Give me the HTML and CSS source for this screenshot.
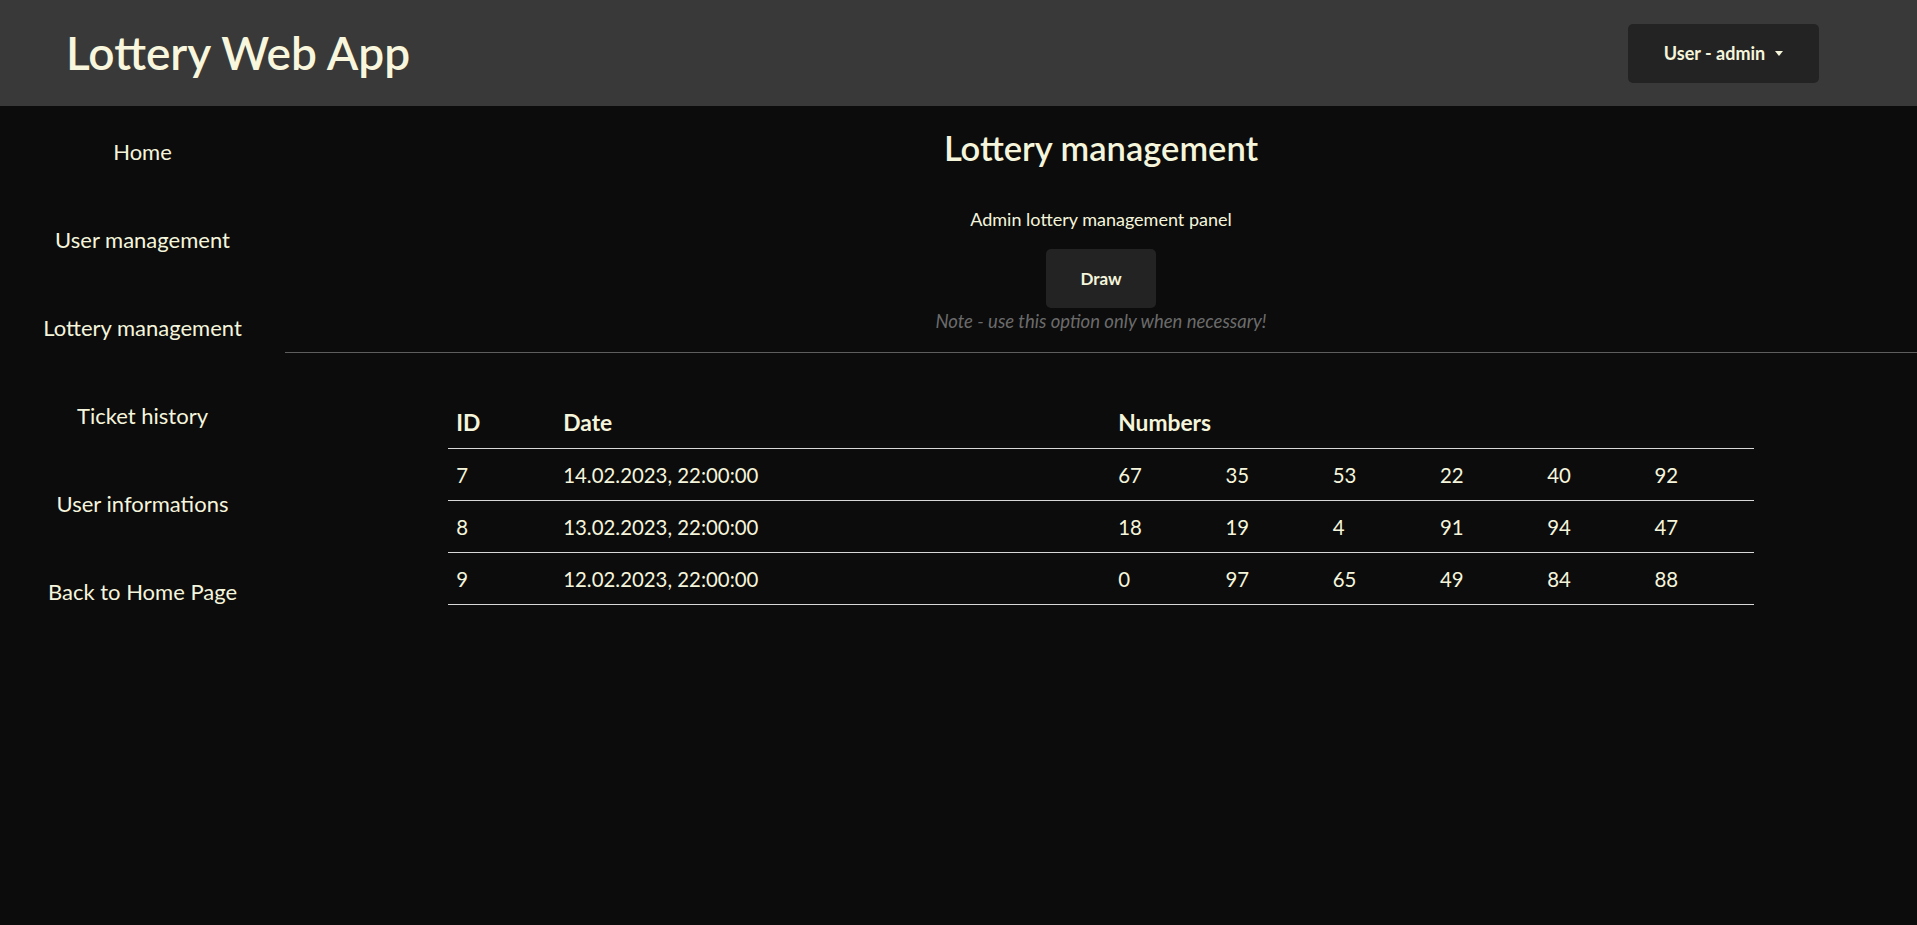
FILE: index.html
```html
<!DOCTYPE html>
<html lang="en">
<head>
<meta charset="utf-8">
<title>Lottery Web App</title>
<link rel="stylesheet" href="styles.css">
</head>
<body>
<header class="topbar">
  <h1 class="brand">Lottery Web App</h1>
  <button class="user-btn">User - admin <span class="caret"></span></button>
</header>
<div class="layout">
  <nav class="sidebar">
    <a class="nav-item" href="#">Home</a>
    <a class="nav-item" href="#">User management</a>
    <a class="nav-item" href="#">Lottery management</a>
    <a class="nav-item" href="#">Ticket history</a>
    <a class="nav-item" href="#">User informations</a>
    <a class="nav-item" href="#">Back to Home Page</a>
  </nav>
  <main class="content">
    <section class="panel">
      <h2 class="panel-title">Lottery management</h2>
      <p class="panel-sub">Admin lottery management panel</p>
      <button class="draw-btn">Draw</button>
      <p class="note">Note - use this option only when necessary!</p>
    </section>
    <hr class="divider">
    <table class="draws">
      <colgroup>
        <col class="c-id"><col class="c-date">
        <col class="c-num"><col class="c-num"><col class="c-num"><col class="c-num"><col class="c-num"><col class="c-num">
      </colgroup>
      <thead>
        <tr><th>ID</th><th>Date</th><th colspan="6">Numbers</th></tr>
      </thead>
      <tbody>
        <tr><td>7</td><td>14.02.2023, 22:00:00</td><td>67</td><td>35</td><td>53</td><td>22</td><td>40</td><td>92</td></tr>
        <tr><td>8</td><td>13.02.2023, 22:00:00</td><td>18</td><td>19</td><td>4</td><td>91</td><td>94</td><td>47</td></tr>
        <tr><td>9</td><td>12.02.2023, 22:00:00</td><td>0</td><td>97</td><td>65</td><td>49</td><td>84</td><td>88</td></tr>
      </tbody>
    </table>
  </main>
</div>
</body>
</html>
```

FILE: styles.css
```css
* { box-sizing: border-box; }
html, body { margin: 0; padding: 0; }
body {
  background: #0c0c0c;
  color: #f5f5dc;
  font-family: Lato, "Open Sans", sans-serif;
  min-height: 925px;
}
.topbar {
  height: 106px;
  background: #393939;
  display: flex;
  align-items: center;
  justify-content: space-between;
  padding: 0 98px 0 66px;
}
.brand {
  margin: 0;
  font-size: 46px;
  font-weight: 600;
  line-height: 1;
  color: #f8f6dc;
}
.user-btn {
  width: 191px;
  height: 59px;
  background: #232323;
  border: none;
  border-radius: 5px;
  color: #f5f5dc;
  font-family: inherit;
  font-weight: 700;
  font-size: 18px;
  display: flex;
  align-items: center;
  justify-content: center;
  padding: 0;
}
.caret {
  display: inline-block;
  width: 0; height: 0;
  border-left: 4.5px solid transparent;
  border-right: 4.5px solid transparent;
  border-top: 5px solid #f5f5dc;
  margin-left: 10px;
}
.layout { display: flex; }
.sidebar {
  width: 285px;
  flex: none;
  display: flex;
  flex-direction: column;
  padding-top: 2px;
}
.nav-item {
  display: block;
  height: 88px;
  line-height: 88px;
  text-align: center;
  color: #f5f5dc;
  text-decoration: none;
  font-size: 22px;
}
.content { flex: 1; }
.panel {
  text-align: center;
  display: flex;
  flex-direction: column;
  align-items: center;
}
.panel-title {
  margin: 20px 0 0;
  font-size: 34.5px;
  line-height: 44px;
  font-weight: 600;
}
.panel-sub {
  margin: 37px 0 0;
  font-size: 18px;
  line-height: 24px;
}
.draw-btn {
  margin-top: 18px;
  width: 110px;
  height: 59px;
  background: #232323;
  border: none;
  border-radius: 5px;
  color: #f5f5dc;
  font-family: inherit;
  font-weight: 700;
  font-size: 17px;
}
.note {
  margin: 1px 0 0;
  font-size: 18.5px;
  line-height: 24px;
  font-style: italic;
  color: #6b6b6b;
}
.divider {
  margin: 19px 0 0;
  border: none;
  border-top: 1px solid #5e5e5e;
  height: 0;
}
.draws {
  width: 80%;
  margin: 44px auto 0;
  border-collapse: collapse;
  table-layout: fixed;
  font-size: 20.4px;
}
.c-id { width: 107px; }
.c-date { width: 555px; }
.draws th, .draws td {
  text-align: left;
  padding: 0 0 0 8px;
  height: 52px;
  border-bottom: 1px solid #d8d8d8;
}
.draws td { padding-top: 2px; }
.draws th { font-weight: 700; height: 51px; font-size: 22.8px; }
```
